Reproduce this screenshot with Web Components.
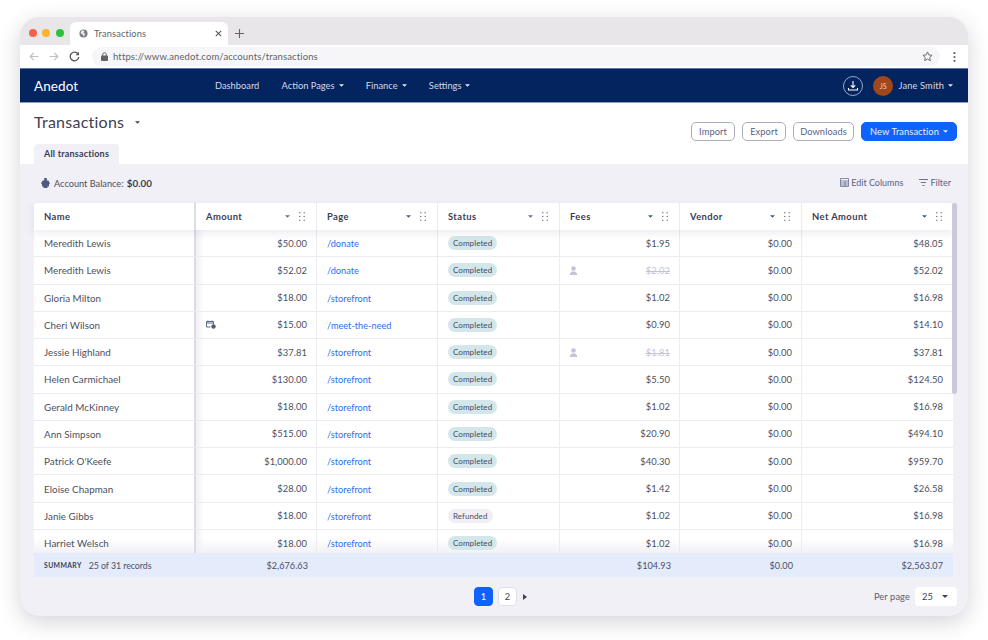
<!DOCTYPE html>
<html>
<head>
<meta charset="utf-8">
<title>Transactions</title>
<style>
  html, body { margin: 0; padding: 0; background: #fff; }
  body { width: 988px; height: 640px; overflow: hidden; font-family: Lato, "Liberation Sans", sans-serif; }
</style>
</head>
<body>
<browser-window>
  <browser-chrome url="https://www.anedot.com/accounts/transactions" tab="Transactions"></browser-chrome>
  <app-nav></app-nav>
  <page-head></page-head>
  <balance-bar></balance-bar>
  <tx-table></tx-table>
  <pager-bar></pager-bar>
</browser-window>

<script>
const caret = (color, w = 6, h = 3) => `<svg width="${w}" height="${h}" viewBox="0 0 6 3" style="display:block;flex:none"><path d="M0 0h6L3 3z" fill="${color}"/></svg>`;

class BrowserWindow extends HTMLElement {
  constructor() {
    super();
    this.attachShadow({ mode: 'open' });
    this.shadowRoot.innerHTML = `
      <style>
        :host {
          display: flex;
          flex-direction: column;
          width: 948px;
          height: 599px;
          margin: 17px 20px 0;
          border-radius: 20px;
          overflow: hidden;
          background: #f0f0f6;
          box-shadow: 0 6px 22px rgba(40, 40, 60, .2);
        }
      </style>
      <slot></slot>`;
  }
}

class BrowserChrome extends HTMLElement {
  constructor() {
    super();
    this.attachShadow({ mode: 'open' });
    const url = this.getAttribute('url');
    const tab = this.getAttribute('tab');
    this.shadowRoot.innerHTML = `
      <style>
        :host { display: block; flex: none; color: #5f6368; }
        .strip { height: 28px; background: #e8e6e9; display: flex; align-items: flex-end; box-sizing: border-box; }
        .lights { display: flex; gap: 5.5px; width: 50px; padding-left: 8.5px; box-sizing: border-box; align-self: center; margin-top: 4px; }
        .lights i { width: 8px; height: 8px; border-radius: 50%; display: block; }
        .tab { width: 158px; height: 23px; background: #fff; border-radius: 6px 6px 0 0; display: flex; align-items: center; box-sizing: border-box; padding: 0 6px 1px 9px; font-size: 9.3px; color: #5f6368; letter-spacing: .12px; }
        .tab span { flex: 1; margin-left: 6px; }
        .plus { margin: 0 0 7px 7px; display: block; }
        .bar { height: 23px; background: #fff; display: flex; align-items: center; box-sizing: border-box; padding-left: 9px; }
        .nav { display: flex; gap: 10px; width: 63px; align-items: center; flex: none; }
        .addr { flex: 1; height: 19px; background: #f6f6f9; border-radius: 9px; display: flex; align-items: center; padding: 0 7px 0 9px; font-size: 9.5px; letter-spacing: .12px; color: #5f6368; }
        .addr span { flex: 1; margin-left: 5px; }
        .menu { width: 28px; display: flex; justify-content: center; flex: none; }
      </style>
      <div class="strip">
        <div class="lights"><i style="background:#f4614f"></i><i style="background:#f8b42a"></i><i style="background:#2cc13f"></i></div>
        <div class="tab">
          <svg width="9" height="9" viewBox="0 0 10 10"><circle cx="5" cy="5" r="4.5" fill="#7a7d82"/><path d="M4 1l2 1.5-1 2 2 1-1.5 3L4 6 2 5V3z" fill="#e8e8ea"/></svg>
          <span>${tab}</span>
          <svg width="7" height="7" viewBox="0 0 7 7"><path d="M.8.8l5.4 5.4M6.200.8L.8 6.200" stroke="#55585c" stroke-width="1.1"/></svg>
        </div>
        <svg class="plus" width="9" height="9" viewBox="0 0 9 9"><path d="M4.500 0v9M0 4.500h9" stroke="#5f6368" stroke-width="1.100"/></svg>
      </div>
      <div class="bar">
        <div class="nav">
          <svg width="10" height="9" viewBox="0 0 10 9"><path d="M9.500 4.500H1.200M4.700 1L1.200 4.500 4.700 8" fill="none" stroke="#c0c1c5" stroke-width="1.200"/></svg>
          <svg width="10" height="9" viewBox="0 0 10 9"><path d="M.5 4.500h8.300M5.300 1l3.500 3.500L5.300 8" fill="none" stroke="#c0c1c5" stroke-width="1.200"/></svg>
          <svg width="11" height="11" viewBox="0 0 11 11"><path d="M9.300 3.400A4.300 4.300 0 1 0 9.800 6" fill="none" stroke="#55585c" stroke-width="1.300"/><path d="M10 .8v3.500H6.500z" fill="#55585c"/></svg>
        </div>
        <div class="addr">
          <svg width="7" height="9" viewBox="0 0 7 9"><path d="M1.700 4V2.600a1.800 1.800 0 0 1 3.600 0V4" fill="none" stroke="#5f6368"/><rect y="3.600" width="7" height="5.400" rx="1" fill="#5f6368"/></svg>
          <span>${url}</span>
          <svg width="11" height="11" viewBox="0 0 12 12"><path d="M6 1l1.500 3.300 3.500.4-2.600 2.400.7 3.500L6 8.800l-3.100 1.800.7-3.500L1 4.700l3.500-.4z" fill="none" stroke="#5f6368" stroke-width="1"/></svg>
        </div>
        <div class="menu"><svg width="3" height="10" viewBox="0 0 3 10"><circle cx="1.500" cy="1.200" r="1.100" fill="#5f6368"/><circle cx="1.500" cy="5" r="1.100" fill="#5f6368"/><circle cx="1.500" cy="8.800" r="1.100" fill="#5f6368"/></svg></div>
      </div>`;
  }
}

class AppNav extends HTMLElement {
  constructor() {
    super();
    this.attachShadow({ mode: 'open' });
    const links = [['Dashboard', false], ['Action Pages', true], ['Finance', true], ['Settings', true]];
    this.shadowRoot.innerHTML = `
      <style>
        :host { display: flex; flex: none; align-items: center; height: 35px; box-sizing: border-box; background: #03245f; border-top: 1px solid #5f77a3; border-bottom: 1px solid #8d9cbc; padding: 0 15px 0 14px; color: #d3d9e8; font-size: 9.3px; letter-spacing: 0; }
        .logo { width: 181px; color: #fff; font-size: 13.500px; letter-spacing: .1px; font-weight: 400; }
        .links { display: flex; gap: 22.300px; flex: 1; }
        .link { display: flex; align-items: center; gap: 4px; }
        .dl { margin-right: 10px; display: block; }
        .avatar { width: 20px; height: 20px; border-radius: 50%; background: #a0481c; color: #e9cdbd; font-size: 7px; display: flex; align-items: center; justify-content: center; margin-right: 5.500px; }
        .user { display: flex; align-items: center; gap: 4px; letter-spacing: .12px; }
      </style>
      <div class="logo">Anedot</div>
      <div class="links">
        ${links.map(([t, c]) => `<div class="link">${t}${c ? caret('#e6eaf3', 5, 3) : ''}</div>`).join('')}
      </div>
      <svg class="dl" width="20" height="20" viewBox="0 0 20 20"><circle cx="10" cy="10" r="9.500" fill="none" stroke="#aab6cf" stroke-width=".9"/><path d="M10 5v6.500M7.800 9.300L10 11.500l2.200-2.200M5.500 12v2h9v-2" fill="none" stroke="#fff" stroke-width="1.100"/></svg>
      <div class="avatar">JS</div>
      <div class="user">Jane Smith ${caret('#e6eaf3', 5, 3)}</div>`;
  }
}

class PageHead extends HTMLElement {
  constructor() {
    super();
    this.attachShadow({ mode: 'open' });
    this.shadowRoot.innerHTML = `
      <style>
        :host { display: block; flex: none; height: 61px; background: #fff; padding: 0 11px 0 14px; box-sizing: border-box; position: relative; }
        .top { display: flex; align-items: flex-start; height: 41px; }
        h1 { margin: 7px 0 0; font-size: 16px; line-height: 24px; font-weight: 400; color: #3e4154; letter-spacing: .25px; display: flex; align-items: center; gap: 11px; flex: 1; }
        .btns { display: flex; gap: 7px; padding-top: 19px; }
        .btn { height: 19px; box-sizing: border-box; border: 1px solid #a9aec2; border-radius: 5px; display: flex; align-items: center; justify-content: center; font-size: 9.300px; letter-spacing: .08px; color: #5c6285; }
        .blue { background: #0f62fe; border-color: #0f62fe; color: #e8f0ff; gap: 4px; }
        .tab { width: 85px; height: 20px; box-sizing: border-box; padding-bottom: 2px; background: #f0f0f6; border-radius: 4px 4px 0 0; font-size: 9px; font-weight: 700; letter-spacing: .2px; color: #3a3d55; display: flex; align-items: center; justify-content: center; }
      </style>
      <div class="top">
        <h1>Transactions ${caret('#3e4154', 5, 3)}</h1>
        <div class="btns">
          <div class="btn" style="width:44px">Import</div>
          <div class="btn" style="width:44px">Export</div>
          <div class="btn" style="width:61px">Downloads</div>
          <div class="btn blue" style="width:96px">New Transaction ${caret('#e8f0ff', 5, 3)}</div>
        </div>
      </div>
      <div class="tab">All transactions</div>`;
  }
}

class BalanceBar extends HTMLElement {
  constructor() {
    super();
    this.attachShadow({ mode: 'open' });
    this.shadowRoot.innerHTML = `
      <style>
        :host { display: flex; flex: none; align-items: center; height: 39px; box-sizing: border-box; padding: 0 17px 2px 21px; font-size: 9.200px; letter-spacing: 0; color: #4a4e66; }
        .bal { display: flex; align-items: center; gap: 4px; flex: 1; }
        b { color: #3a3d55; font-size: 9.800px; margin-left: 1px; }
        .act { display: flex; align-items: center; gap: 2px; color: #5c6285; margin-left: 16px; font-size: 9px; }
      </style>
      <div class="bal">
        <svg width="9" height="10" viewBox="0 0 9 10"><path d="M3.200 0h2.600v2.600h1.600L9 5.400 8 6.200V8.500H6.500V10h-4V8.500H1V6.200L0 5.400 1.600 2.600h1.600z" fill="#4d5a7d"/></svg>
        <span>Account Balance: <b>$0.00</b></span>
      </div>
      <div class="act">
        <svg width="9" height="9" viewBox="0 0 9 9"><path d="M.5.500h8v8h-8zM.5 3h8M.5 5h8M.5 7h8M5 3v5" fill="none" stroke="#6c7190" stroke-width=".8"/></svg>
        Edit Columns
      </div>
      <div class="act">
        <svg width="9" height="7" viewBox="0 0 9 7"><path d="M0 .5h9M1.800 3.500h5.400M3.500 6.500h2" stroke="#6c7190"/></svg>
        Filter
      </div>`;
  }
}

class StatusPill extends HTMLElement {
  constructor() {
    super();
    this.attachShadow({ mode: 'open' });
    this.shadowRoot.innerHTML = `
      <style>
        :host { display: inline-flex; align-items: center; height: 14px; padding: 0 5px; border-radius: 7px; background: #d3e7ea; color: #3e4a6a; font-size: 8px; letter-spacing: .08px; }
        :host([kind="refunded"]) { background: #f0f0f4; color: #4c4f68; }
      </style>
      <slot></slot>`;
  }
}

class TxRow extends HTMLElement {
  constructor() {
    super();
    this.attachShadow({ mode: 'open' });
  }
  connectedCallback() {
    const a = n => this.getAttribute(n) || '';
    const sched = this.hasAttribute('scheduled')
      ? `<svg class="lead" width="10" height="9" viewBox="0 0 10 9"><path d="M.5 1.500h7v2.500M.5 1.500v5.500h4M.5 3h7M2 .5v1.500M6 .5v1.500" fill="none" stroke="#4d5a7d" stroke-width=".9"/><circle cx="7.500" cy="6.500" r="2.200" fill="#4d5a7d"/></svg>` : '';
    const comp = this.hasAttribute('covered');
    const feeLead = comp
      ? `<svg class="lead" width="7" height="9" viewBox="0 0 7 9"><circle cx="3.500" cy="2.500" r="2.300" fill="#c6c4d4"/><path d="M0 9V7.200l2-1.700h3l2 1.700V9z" fill="#c6c4d4"/></svg>` : '';
    this.shadowRoot.innerHTML = `
      <style>
        :host { display: grid; grid-template-columns: var(--tx-cols); height: 27.280px; box-sizing: border-box; border-bottom: 1px solid #ebebf2; background: #fff; font-size: 9.800px; letter-spacing: .05px; color: #4c4f60; }
        .c { display: flex; align-items: center; box-sizing: border-box; padding: 0 9px 0 10px; border-right: 1px solid #ebebf2; }
        .c:last-child { border-right: 0; padding-right: 10px; }
        .r { justify-content: flex-end; font-size: 9.400px; }
        .name { border-right: 2px solid #dcdce6; }
        .amt { background: linear-gradient(90deg, #f0f0f6, rgba(255,255,255,0) 8px); }
        .lead { margin-right: auto; flex: none; }
        a { color: #2a6ff0; text-decoration: none; font-size: 9.200px; letter-spacing: 0; line-height: 12px; margin-top: 2px; }
        s { color: #c6c4d4; }
      </style>
      <div class="c name">${a('name')}</div>
      <div class="c r amt">${sched}${a('amount')}</div>
      <div class="c"><a href="#">${a('page')}</a></div>
      <div class="c"><status-pill kind="${a('status').toLowerCase()}">${a('status')}</status-pill></div>
      <div class="c r">${feeLead}${comp ? `<s>${a('fees')}</s>` : a('fees')}</div>
      <div class="c r">$0.00</div>
      <div class="c r">${a('net')}</div>`;
  }
}

class TxTable extends HTMLElement {
  constructor() {
    super();
    this.attachShadow({ mode: 'open' });
    const heads = ['Name', 'Amount', 'Page', 'Status', 'Fees', 'Vendor', 'Net Amount'];
    const carets = { Amount: '#6a6e8c', Page: '#4d5a7d', Status: '#6a6e8c', Fees: '#2f5f96', Vendor: '#2f5f96', 'Net Amount': '#2f5f96' };
    const dots = `<svg width="6" height="9" viewBox="0 0 6 9"><g fill="#6c7080"><circle cx=".8" cy=".8" r=".7"/><circle cx="5.200" cy=".8" r=".7"/><circle cx=".8" cy="4.500" r=".7"/><circle cx="5.200" cy="4.500" r=".7"/><circle cx=".8" cy="8.200" r=".7"/><circle cx="5.200" cy="8.200" r=".7"/></g></svg>`;
    const rows = [
      ['Meredith Lewis', '$50.00', '/donate', 'Completed', '$1.95', '$48.05'],
      ['Meredith Lewis', '$52.02', '/donate', 'Completed', '$2.02', '$52.02', 'covered'],
      ['Gloria Milton', '$18.00', '/storefront', 'Completed', '$1.02', '$16.98'],
      ['Cheri Wilson', '$15.00', '/meet-the-need', 'Completed', '$0.90', '$14.10', 'scheduled'],
      ['Jessie Highland', '$37.81', '/storefront', 'Completed', '$1.81', '$37.81', 'covered'],
      ['Helen Carmichael', '$130.00', '/storefront', 'Completed', '$5.50', '$124.50'],
      ['Gerald McKinney', '$18.00', '/storefront', 'Completed', '$1.02', '$16.98'],
      ['Ann Simpson', '$515.00', '/storefront', 'Completed', '$20.90', '$494.10'],
      ["Patrick O'Keefe", '$1,000.00', '/storefront', 'Completed', '$40.30', '$959.70'],
      ['Eloise Chapman', '$28.00', '/storefront', 'Completed', '$1.42', '$26.58'],
      ['Janie Gibbs', '$18.00', '/storefront', 'Refunded', '$1.02', '$16.98'],
      ['Harriet Welsch', '$18.00', '/storefront', 'Completed', '$1.02', '$16.98'],
    ];
    const esc = s => s.replace(/'/g, '&#39;');
    this.shadowRoot.innerHTML = `
      <style>
        :host { --tx-cols: 162px 121px 121px 122px 120px 122px 151px; display: block; flex: none; width: 919px; margin-left: 14px; position: relative; }
        .head { display: grid; grid-template-columns: var(--tx-cols); height: 27px; background: #fff; font-size: 9.400px; font-weight: 700; letter-spacing: .42px; color: #3a3d55; box-shadow: 0 3px 8px rgba(60,60,110,.10); position: relative; z-index: 2; border-radius: 3px 3px 0 0; }
        .h { display: flex; align-items: center; box-sizing: border-box; padding: 0 11px 0 10px; border-right: 1px solid #ebebf2; gap: 9px; }
        .h:first-child { border-right: 2px solid #dcdce6; }
        .h:last-child { border-right: 0; }
        .h span { flex: 1; }
        .body { height: 323px; overflow: hidden; position: relative; }
        tx-row:last-child { background: linear-gradient(#fff 35%, #eeeef5); }
        .sum { display: grid; grid-template-columns: var(--tx-cols); height: 24px; background: #e4ebfb; font-size: 9.100px; letter-spacing: .05px; color: #4c4f68; }
        .s { display: flex; align-items: center; justify-content: flex-end; padding: 0 9px 0 10px; box-sizing: border-box; }
        .s:last-child { padding-right: 10px; }
        .s.first { justify-content: flex-start; white-space: nowrap; font-size: 8.800px; letter-spacing: -.05px; }
        .s.first b { font-size: 6.800px; letter-spacing: .4px; margin-right: 7px; color: #3a3d55; }
        .thumb { position: absolute; left: 918px; top: 0; width: 5px; height: 191px; border-radius: 3px; background: #c9c9d9; z-index: 3; }
      </style>
      <div class="head">
        ${heads.map(h => `<div class="h"><span>${h}</span>${carets[h] ? caret(carets[h], 5, 3) + dots : ''}</div>`).join('')}
      </div>
      <div class="body">
        ${rows.map(r => `<tx-row name='${esc(r[0])}' amount="${r[1]}" page="${r[2]}" status="${r[3]}" fees="${r[4]}" net="${r[5]}" ${r[6] || ''}></tx-row>`).join('')}
      </div>
      <div class="sum">
        <div class="s first"><b>SUMMARY</b> 25 of 31 records</div>
        <div class="s">$2,676.63</div><div class="s"></div><div class="s"></div>
        <div class="s">$104.93</div><div class="s">$0.00</div><div class="s">$2,563.07</div>
      </div>
      <div class="thumb"></div>`;
  }
}

class PagerBar extends HTMLElement {
  constructor() {
    super();
    this.attachShadow({ mode: 'open' });
    this.shadowRoot.innerHTML = `
      <style>
        :host { display: grid; grid-template-columns: 1fr auto; align-items: start; flex: 1; box-sizing: border-box; padding: 10px 11px 0 454px; font-size: 9.300px; letter-spacing: .1px; color: #5a5d70; }
        .pages { display: flex; align-items: center; gap: 5px; height: 19px; }
        .p { width: 19px; height: 19px; box-sizing: border-box; border-radius: 4px; background: #fff; border: 1px solid #dfdfe8; display: flex; align-items: center; justify-content: center; color: #3e4154; }
        .on { background: #0f62fe; border-color: #0f62fe; color: #fff; }
        .next { margin-left: 1px; }
        .per { display: flex; align-items: center; gap: 5px; }
        .sel { width: 42px; height: 19px; background: #fff; border-radius: 4px; box-sizing: border-box; padding: 0 9px 0 7px; display: flex; align-items: center; justify-content: space-between; color: #3e4154; }
      </style>
      <div class="pages">
        <div class="p on">1</div><div class="p">2</div>
        <svg class="next" width="4" height="6" viewBox="0 0 4 6"><path d="M0 0l4 3-4 3z" fill="#3e4154"/></svg>
      </div>
      <div class="per">Per page <div class="sel">25 ${caret('#3e4154', 6, 3)}</div></div>`;
  }
}

customElements.define('browser-window', BrowserWindow);
customElements.define('browser-chrome', BrowserChrome);
customElements.define('app-nav', AppNav);
customElements.define('page-head', PageHead);
customElements.define('balance-bar', BalanceBar);
customElements.define('status-pill', StatusPill);
customElements.define('tx-row', TxRow);
customElements.define('tx-table', TxTable);
customElements.define('pager-bar', PagerBar);
</script>
</body>
</html>
